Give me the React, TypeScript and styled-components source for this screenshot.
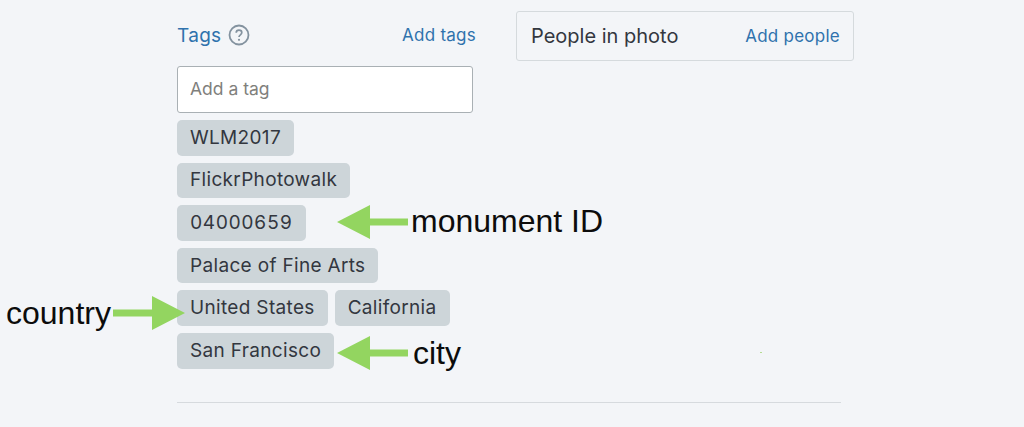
import styled, { createGlobalStyle } from "styled-components";

const GlobalStyle = createGlobalStyle`
  html, body {
    margin: 0;
    padding: 0;
    background: #f3f5f8;
  }
`;

const Page = styled.div`
  position: relative;
  width: 1024px;
  height: 427px;
  overflow: hidden;
  box-sizing: border-box;
  padding: 11px 0 0 177px;
  background: #f3f5f8;
  font-family: Inter, "Liberation Sans", sans-serif;
`;

const Columns = styled.div`
  display: flex;
  align-items: flex-start;
  gap: 42px;
  height: 391px;
`;

const TagsColumn = styled.section`
  width: 297px;
`;

const TagsHeader = styled.div`
  display: flex;
  align-items: center;
  justify-content: space-between;
  height: 48px;
  margin-right: -2px;
`;

const TagsTitle = styled.div`
  display: flex;
  align-items: center;
  gap: 7px;
  font-size: 19px;
  letter-spacing: 0.3px;
  color: #2f72ad;
`;

const HelpIcon = styled.svg`
  display: block;
  width: 22px;
  height: 22px;
`;

const TextLink = styled.a`
  font-size: 17px;
  letter-spacing: 0.25px;
  color: #2f72ad;
`;

const TagInput = styled.input`
  display: block;
  box-sizing: border-box;
  width: 296px;
  height: 47px;
  margin: 7px 0 7px 0;
  padding: 0 12px 2px 12px;
  border: 1px solid #a9b0b4;
  border-radius: 3px;
  background: #fff;
  font: 17.5px Inter, "Liberation Sans", sans-serif;
  outline: none;
  &::placeholder {
    color: #80807c;
    opacity: 1;
  }
`;

const TagList = styled.div`
  display: flex;
  flex-direction: column;
  gap: 7px;
`;

const TagRow = styled.div`
  display: flex;
  gap: 7px;
`;

const Tag = styled.span<{ $digits?: boolean }>`
  display: flex;
  align-items: center;
  box-sizing: border-box;
  height: 35.6px;
  padding: 0 13px 1px;
  border-radius: 5px;
  background: #cdd5d9;
  font-size: 19px;
  letter-spacing: ${(p) => (p.$digits ? "0.5px" : "0.33px")};
  font-variant-numeric: ${(p) => (p.$digits ? "tabular-nums" : "normal")};
  color: #33373f;
  white-space: nowrap;
`;

const PeopleBox = styled.section`
  display: flex;
  align-items: center;
  justify-content: space-between;
  box-sizing: border-box;
  width: 338px;
  height: 50px;
  padding: 0 13px 0 14px;
  border: 1px solid #d5dadd;
  border-radius: 3px;
`;

const PeopleTitle = styled.span`
  font-size: 20px;
  color: #33373f;
`;

const Divider = styled.hr`
  width: 664px;
  height: 1px;
  margin: 0;
  border: 0;
  background: #d6dade;
`;

const Note = styled.span<{ $x: number; $y: number }>`
  position: absolute;
  left: ${(p) => p.$x}px;
  top: ${(p) => p.$y}px;
  font-family: "Liberation Sans", Arial, sans-serif;
  font-size: 32px;
  line-height: 34px;
  color: #0c0c0c;
  white-space: nowrap;
`;

const Arrow = styled.svg<{ $x: number; $y: number }>`
  position: absolute;
  left: ${(p) => p.$x}px;
  top: ${(p) => p.$y}px;
  width: 72px;
  height: 34px;
`;

const Speck = styled.i`
  position: absolute;
  left: 760px;
  top: 352px;
  width: 2px;
  height: 1px;
  background: #b5dc92;
`;

const LeftArrow = ({ x, y }: { x: number; y: number }) => (
  <Arrow $x={x} $y={y} viewBox="0 0 72 34">
    <path d="M0 17 L33 0 V13.5 H71 V20.5 H33 V34 Z" fill="#93d560" />
  </Arrow>
);

const RightArrow = ({ x, y }: { x: number; y: number }) => (
  <Arrow $x={x} $y={y} viewBox="0 0 72 34">
    <path d="M72 17 L39 0 V13.5 H0 V20.5 H39 V34 Z" fill="#93d560" />
  </Arrow>
);

export default function App() {
  return (
    <Page>
      <GlobalStyle />
      <Columns>
        <TagsColumn>
          <TagsHeader>
            <TagsTitle>
              Tags
              <HelpIcon viewBox="0 0 22 22" fill="none">
                <circle cx="11" cy="11" r="9.5" stroke="#83929f" strokeWidth="1.8" />
                <path
                  d="M8.2 8.8c0-1.6 1.2-2.6 2.8-2.6s2.8 1 2.8 2.4c0 2.2-2.8 2.2-2.8 4.4"
                  stroke="#83929f"
                  strokeWidth="1.7"
                />
                <circle cx="11" cy="15.8" r="1.1" fill="#83929f" />
              </HelpIcon>
            </TagsTitle>
            <TextLink>Add tags</TextLink>
          </TagsHeader>
          <TagInput placeholder="Add a tag" />
          <TagList>
            <TagRow>
              <Tag>WLM2017</Tag>
            </TagRow>
            <TagRow>
              <Tag>FlickrPhotowalk</Tag>
            </TagRow>
            <TagRow>
              <Tag $digits>04000659</Tag>
            </TagRow>
            <TagRow>
              <Tag>Palace of Fine Arts</Tag>
            </TagRow>
            <TagRow>
              <Tag>United States</Tag>
              <Tag>California</Tag>
            </TagRow>
            <TagRow>
              <Tag>San Francisco</Tag>
            </TagRow>
          </TagList>
        </TagsColumn>
        <PeopleBox>
          <PeopleTitle>People in photo</PeopleTitle>
          <TextLink>Add people</TextLink>
        </PeopleBox>
      </Columns>
      <Divider />
      <LeftArrow x={337} y={205} />
      <RightArrow x={113} y={296} />
      <LeftArrow x={337} y={336} />
      <Note $x={411} $y={204}>monument ID</Note>
      <Note $x={6} $y={296}>country</Note>
      <Note $x={413} $y={336}>city</Note>
      <Speck />
    </Page>
  );
}
